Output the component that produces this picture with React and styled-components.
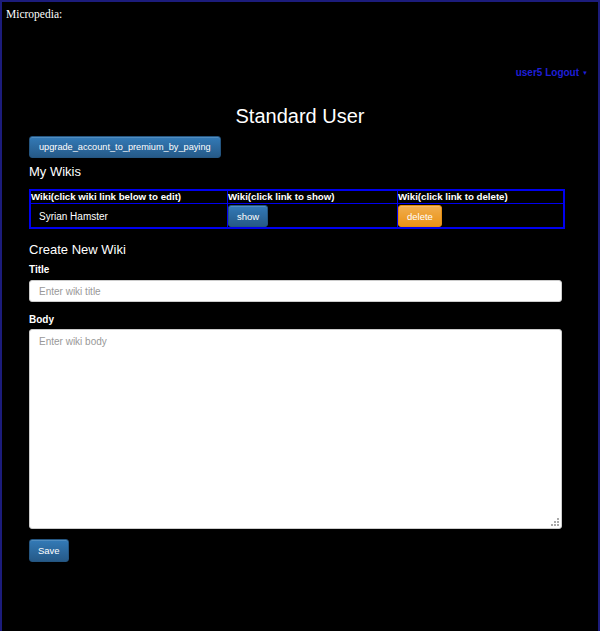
import React from "react";
import styled, { createGlobalStyle } from "styled-components";

const Global = createGlobalStyle`
  html, body { margin: 0; padding: 0; background: #000; }
  body { font-family: "Liberation Sans", Arial, sans-serif; color: #fff; }
`;

const Page = styled.div`
  min-height: 700px;
  border: 2px solid #1c1c7c;
  border-bottom: none;
  padding: 5px 4px;
`;

const Brand = styled.div`
  font-family: "Liberation Serif", "Times New Roman", serif;
  font-size: 11.5px;
  line-height: 14px;
  color: #fff;
`;

const Nav = styled.div`
  margin-top: 45px;
  display: flex;
  justify-content: flex-end;
  align-items: center;
  gap: 3px;
  padding-right: 6px;
  font-size: 10px;
  line-height: 14px;
  font-weight: bold;
  color: #1f1fd8;
`;

const Caret = styled.span`
  font-size: 6px;
  font-weight: normal;
`;

const Heading = styled.h1`
  margin: 24px 0 0;
  text-align: center;
  font-size: 20px;
  line-height: 24px;
  font-weight: normal;
`;

const Container = styled.div`
  width: 536px;
  margin-left: 23px;
`;

const Btn = styled.button`
  display: inline-flex;
  align-items: center;
  justify-content: center;
  height: ${(p) => p.$h || 22}px;
  padding: 0 ${(p) => p.$px || 9}px;
  font-family: "Liberation Sans", Arial, sans-serif;
  font-size: ${(p) => p.$fs || 9.5}px;
  color: #fff;
  border-radius: 3px;
  border: 1px solid ${(p) => (p.$warn ? "#e38d13" : "#245580")};
  background: ${(p) =>
    p.$warn
      ? "linear-gradient(#f0ad4e, #eb9316)"
      : "linear-gradient(#337ab7, #265a88)"};
  box-shadow: inset 0 1px 0 rgba(255,255,255,0.15);
  cursor: pointer;
`;

const Upgrade = styled(Btn)`
  margin-top: 8px;
`;

const SubHeading = styled.h3`
  margin: ${(p) => p.$mt}px 0 0;
  font-size: 13px;
  line-height: 16px;
  font-weight: normal;
`;

const Table = styled.table`
  margin-top: 9px;
  width: 536px;
  border-collapse: collapse;
  border: 2px solid #0000f0;
  font-size: 9.7px;
  table-layout: fixed;
`;

const Th = styled.th`
  border: 1px solid #0000f0;
  text-align: left;
  font-weight: bold;
  padding: 0;
  height: 12px;
  line-height: 12px;
  width: ${(p) => p.$w}px;
`;

const Td = styled.td`
  border-top: 1px solid #0000f0;
  border-left: 1px solid #0000f0;
  padding: 1px 0 0 ${(p) => p.$pl || 0}px;
  height: 22px;
  font-size: 10px;
  vertical-align: ${(p) => (p.$pl ? "middle" : "top")};
`;

const Label = styled.label`
  display: block;
  margin-top: ${(p) => p.$mt}px;
  font-size: 10px;
  line-height: 12px;
  font-weight: bold;
`;

const Input = styled.input`
  display: block;
  box-sizing: border-box;
  margin-top: 4px;
  width: 533px;
  height: 22px;
  padding: 0 9px;
  border: 1px solid #ccc;
  border-radius: 3px;
  background: #fff;
  font-family: "Liberation Sans", Arial, sans-serif;
  font-size: 10px;
  &::placeholder { color: #999; }
`;

const AreaWrap = styled.div`
  position: relative;
  margin-top: 3px;
  width: 533px;
`;

const Area = styled.textarea`
  display: block;
  box-sizing: border-box;
  width: 533px;
  height: 200px;
  padding: 6px 9px;
  border: 1px solid #ccc;
  border-radius: 3px;
  background: #fff;
  resize: none;
  font-family: "Liberation Sans", Arial, sans-serif;
  font-size: 10px;
  &::placeholder { color: #999; }
`;

const Grip = styled.svg`
  position: absolute;
  right: 3px;
  bottom: 3px;
  pointer-events: none;
`;

const Save = styled(Btn)`
  margin-top: 10px;
`;

export default function App() {
  return (
    <>
      <Global />
      <Page>
        <Brand>Micropedia:</Brand>
        <Nav>
          <span>user5 Logout</span>
          <Caret>▼</Caret>
        </Nav>
        <Heading>Standard User</Heading>
        <Container>
          <Upgrade $h={22} $fs={9.2}>upgrade_account_to_premium_by_paying</Upgrade>
          <SubHeading $mt={6}>My Wikis</SubHeading>
          <Table>
            <thead>
              <tr>
                <Th $w={196}>Wiki(click wiki link below to edit)</Th>
                <Th $w={169}>Wiki(click link to show)</Th>
                <Th>Wiki(click link to delete)</Th>
              </tr>
            </thead>
            <tbody>
              <tr>
                <Td $pl={8}>Syrian Hamster</Td>
                <Td>
                  <Btn $h={22} $px={8}>show</Btn>
                </Td>
                <Td>
                  <Btn $h={22} $px={8} $warn>delete</Btn>
                </Td>
              </tr>
            </tbody>
          </Table>
          <SubHeading $mt={13}>Create New Wiki</SubHeading>
          <Label $mt={6}>Title</Label>
          <Input placeholder="Enter wiki title" />
          <Label $mt={12}>Body</Label>
          <AreaWrap>
            <Area placeholder="Enter wiki body" />
            <Grip width="8" height="8" viewBox="0 0 8 8">
              <rect x="6" y="0" width="2" height="2" fill="#aaa" />
              <rect x="3" y="3" width="2" height="2" fill="#aaa" />
              <rect x="6" y="3" width="2" height="2" fill="#aaa" />
              <rect x="0" y="6" width="2" height="2" fill="#aaa" />
              <rect x="3" y="6" width="2" height="2" fill="#aaa" />
              <rect x="6" y="6" width="2" height="2" fill="#aaa" />
            </Grip>
          </AreaWrap>
          <Save $h={23} $px={8}>Save</Save>
        </Container>
      </Page>
    </>
  );
}
